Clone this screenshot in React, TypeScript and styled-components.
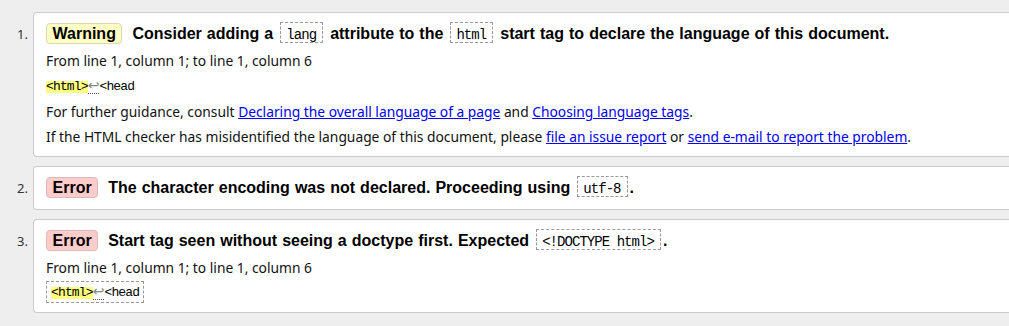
import React from "react";
import styled, { createGlobalStyle, css } from "styled-components";

const Global = createGlobalStyle`
  html, body {
    margin: 0;
    padding: 0;
    background: #eee;
    overflow: hidden;
  }
  body {
    font-family: "Noto Sans", "Liberation Sans", sans-serif;
    color: #000;
  }
`;

const Page = styled.main`
  padding-top: 12px;
`;

const List = styled.ol`
  list-style: none;
  margin: 0;
  padding: 0;
  display: flex;
  flex-direction: column;
  gap: 9px;
`;

const Item = styled.li`
  display: flex;
  align-items: baseline;
`;

const Num = styled.span`
  flex: 0 0 28px;
  padding-right: 5px;
  text-align: right;
  font: 13px "Noto Sans", sans-serif;
  color: #333;
`;

const Card = styled.div`
  flex: 1;
  min-width: 0;
  background: #fff;
  border: 1px solid #ccc;
  border-right: none;
  border-radius: 4px 0 0 4px;
  padding: 9px 12px 7px 12px;
`;

const Title = styled.p`
  margin: 0 0 2px;
  font: bold 16px/24px "Liberation Sans", Arial, sans-serif;
  word-spacing: 0.6px;
  color: #000;
`;

const Badge = styled.strong<{ $kind: "warning" | "error" }>`
  display: inline-block;
  line-height: 18px;
  padding: 1px 5.5px 0;
  margin-right: 5px;
  border: 1px solid ${(p) => (p.$kind === "warning" ? "#d9d6b0" : "#dbb8b8")};
  border-radius: 4px;
  background: ${(p) => (p.$kind === "warning" ? "#ffffc4" : "#ffcccc")};
`;

const Code = styled.code`
  display: inline-block;
  font: 14px/14px "Liberation Mono", "DejaVu Sans Mono", monospace;
  letter-spacing: -0.95px;
  word-spacing: 0;
  padding: 5px 6px 0 5px;
  margin: 0 2px;
  border: 1px dashed #999;
`;

const Details = styled.div`
  margin-top: 0;
`;

const Detail = styled.p`
  margin: 0;
  font: 13.8px/25px "Noto Sans", sans-serif;
  color: #111;
`;

const Link = styled.a`
  color: #0000ee;
  text-decoration: underline;
`;

const Extract = styled.p`
  margin: 0;
  font: 13px/25px "Liberation Mono", "DejaVu Sans Mono", monospace;
  letter-spacing: -0.85px;
  color: #000;
`;

const Frame = styled.code<{ $framed?: boolean }>`
  font: inherit;
  ${(p) =>
    p.$framed &&
    css`
      display: inline-block;
      line-height: 18px;
      border: 1px dashed #999;
      padding: 0 4px;
    `}
`;

const Mark = styled.mark`
  display: inline-block;
  line-height: 12px;
  background: #ffff80;
  color: #000;
`;

const LineBreak = styled.span`
  font-family: "DejaVu Sans", sans-serif;
  font-size: 14px;
  letter-spacing: 0;
  color: #888;
  border-bottom: 1px dotted #555;
`;

type Msg = {
  kind: "warning" | "error";
  title: React.ReactNode;
  details?: React.ReactNode;
};

const Snippet: React.FC<{ framed?: boolean }> = ({ framed }) => (
  <Extract>
    <Frame $framed={framed}>
      <Mark>&lt;html&gt;</Mark>
      <LineBreak>↩</LineBreak>&lt;head
    </Frame>
  </Extract>
);

const location = <Detail>From line 1, column 1; to line 1, column 6</Detail>;

const messages: Msg[] = [
  {
    kind: "warning",
    title: (
      <>
        Consider adding a <Code>lang</Code> attribute to the <Code>html</Code> start tag to
        declare the language of this document.
      </>
    ),
    details: (
      <>
        {location}
        <Snippet />
        <Detail>
          For further guidance, consult{" "}
          <Link href="#">Declaring the overall language of a page</Link> and{" "}
          <Link href="#">Choosing language tags</Link>.
        </Detail>
        <Detail>
          If the HTML checker has misidentified the language of this document, please{" "}
          <Link href="#">file an issue report</Link> or{" "}
          <Link href="#">send e-mail to report the problem</Link>.
        </Detail>
      </>
    ),
  },
  {
    kind: "error",
    title: (
      <>
        The character encoding was not declared. Proceeding using <Code>utf-8</Code>.
      </>
    ),
  },
  {
    kind: "error",
    title: (
      <>
        Start tag seen without seeing a doctype first. Expected <Code>&lt;!DOCTYPE html&gt;</Code>.
      </>
    ),
    details: (
      <>
        {location}
        <Snippet framed />
      </>
    ),
  },
];

export default function App() {
  return (
    <>
      <Global />
      <Page>
        <List>
          {messages.map((m, i) => (
            <Item key={i}>
              <Num>{i + 1}.</Num>
              <Card>
                <Title>
                  <Badge $kind={m.kind}>{m.kind === "warning" ? "Warning" : "Error"}</Badge>{" "}
                  {m.title}
                </Title>
                {m.details && <Details>{m.details}</Details>}
              </Card>
            </Item>
          ))}
        </List>
      </Page>
    </>
  );
}
